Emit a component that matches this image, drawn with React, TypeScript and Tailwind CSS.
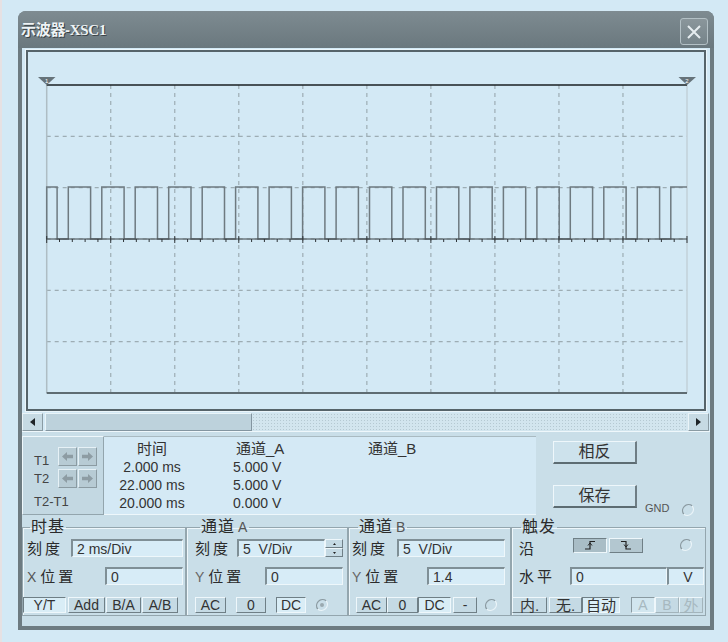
import React from "react";

const raised =
  "flex items-center justify-center h-[16px] text-[14px] leading-none text-[#333] bg-[#c5dae4] border border-t-[#eef7fb] border-l-[#eef7fb] border-b-[#6f7f86] border-r-[#6f7f86]";
const pressed =
  "flex items-center justify-center h-[16px] text-[14px] leading-none text-[#333] bg-[#d9edf6] border border-t-[#6f7f86] border-l-[#6f7f86] border-b-[#eef7fb] border-r-[#eef7fb]";
const input =
  "h-[18px] flex items-center pl-[4px] text-[14px] leading-none text-[#333] bg-[#d7ecf7] border-t-2 border-l-2 border-t-[#7f8f96] border-l-[#7f8f96] border-b border-r border-b-[#eef7fb] border-r-[#eef7fb]";
const label = "text-[15px] tracking-[3px] text-[#2b2b2b] leading-none";
const fieldset =
  "border border-[#94a6ae] shadow-[inset_1px_1px_0_#eef7fb] pb-[2px]";
const legend = "text-[16px] leading-[18px] px-[1px] text-[#2b2b2b] tracking-[1px]";

function Radio({ dot }: { dot?: boolean }) {
  return (
    <svg width="14" height="14" viewBox="0 0 14 14">
      <path d="M11.2 2.8 A6 6 0 0 0 2.8 11.2" fill="none" stroke="#8b9aa1" strokeWidth="1.3" />
      <path d="M2.8 11.2 A6 6 0 0 0 11.2 2.8" fill="none" stroke="#eaf4f8" strokeWidth="1.3" />
      {dot && <circle cx="7" cy="7" r="2" fill="#9aa9af" />}
    </svg>
  );
}

function ArrowBtn({ dir }: { dir: "l" | "r" }) {
  return (
    <div className="w-[19px] h-[19px] bg-[#b7cbd4] border border-t-[#e6f1f6] border-l-[#e6f1f6] border-b-[#8b9ba2] border-r-[#8b9ba2] flex items-center justify-center">
      <svg width="13" height="11" viewBox="0 0 13 11">
        {dir === "l" ? (
          <polygon points="1,5.5 6,1 6,3.8 12,3.8 12,7.2 6,7.2 6,10" fill="#8d9ca3" />
        ) : (
          <polygon points="12,5.5 7,1 7,3.8 1,3.8 1,7.2 7,7.2 7,10" fill="#8d9ca3" />
        )}
      </svg>
    </div>
  );
}

function Plot() {
  const x0 = 18.7;
  const x1 = 659;
  const dx = (x1 - x0) / 10;
  const y0 = 33;
  const y1 = 341;
  const dy = (y1 - y0) / 6;
  const hi = 135;
  const lo = 187;

  let d = `M${x0} ${lo} L${x0} ${hi} L29.1 ${hi} L29.1 ${lo}`;
  for (let k = 0; k < 19; k++) {
    const r = 40.3 + 33.47 * k;
    const f = r + 22.3;
    d += ` L${r.toFixed(1)} ${lo} L${r.toFixed(1)} ${hi}`;
    if (f < x1) d += ` L${f.toFixed(1)} ${hi} L${f.toFixed(1)} ${lo}`;
    else d += ` L${x1} ${hi}`;
  }

  const ticks = [];
  for (let i = 0; i <= 50; i++) {
    const x = x0 + (i * dx) / 5;
    const major = i % 5 === 0;
    ticks.push(
      <line key={i} x1={x} x2={x} y1={major ? lo - 3 : lo} y2={major ? lo + 4 : lo + 3} stroke="#2f3539" strokeWidth="1" />
    );
  }

  return (
    <svg width="676" height="357" viewBox="0 0 676 357" className="block">
      {Array.from({ length: 9 }, (_, i) => (
        <line key={"v" + i} x1={x0 + dx * (i + 1)} x2={x0 + dx * (i + 1)} y1={y0} y2={y1} stroke="#9dadb4" strokeWidth="1.2" strokeDasharray="4 4" />
      ))}
      {Array.from({ length: 5 }, (_, i) => (
        <line key={"h" + i} x1={x0} x2={x1} y1={y0 + dy * (i + 1)} y2={y0 + dy * (i + 1)} stroke="#9dadb4" strokeWidth="1.2" strokeDasharray="4 4" />
      ))}
      <line x1={x0} x2={x0} y1={y0} y2={y1} stroke="#aebdc4" strokeWidth="1.5" />
      <line x1={x1} x2={x1} y1={y0} y2={y1} stroke="#c2d1d8" strokeWidth="1.5" />
      <line x1={x0} x2={x1} y1={y1} y2={y1} stroke="#5e6c72" strokeWidth="2" />
      <line x1={x0} x2={x1} y1={y0} y2={y0} stroke="#1a1f22" strokeWidth="1.5" />
      <path d={d} fill="none" stroke="#6e7a80" strokeWidth="1.5" />
      <line x1={x0} x2={x1} y1={lo} y2={lo} stroke="#3a4246" strokeWidth="1" />
      {ticks}
      <polygon points="10,25 27.5,25 18.7,33" fill="#66737a" />
      <text x="18.7" y="30.5" fontSize="6" fill="#ffffff" textAnchor="middle" fontFamily="Liberation Sans, sans-serif">1</text>
      <polygon points="650.5,25 668,25 659,33" fill="#66737a" />
      <text x="659" y="30.5" fontSize="6" fill="#ffffff" textAnchor="middle" fontFamily="Liberation Sans, sans-serif">2</text>
    </svg>
  );
}

function ScrollArrow({ dir }: { dir: "l" | "r" }) {
  return (
    <div className="w-[21px] h-full bg-[#c6dae3] border border-t-[#eaf4f8] border-l-[#eaf4f8] border-b-[#8a9ba3] border-r-[#8a9ba3] flex items-center justify-center">
      <svg width="5" height="8" viewBox="0 0 5 8">
        {dir === "l" ? <polygon points="5,0 5,8 0,4" fill="#1f2427" /> : <polygon points="0,0 0,8 5,4" fill="#1f2427" />}
      </svg>
    </div>
  );
}

export default function App() {
  return (
    <div className="w-[728px] h-[642px] bg-[#d3e9f5] pt-[11px] pl-[16px] border-l-2 border-[#e6e1e3] font-['Liberation_Sans','Noto_Sans_CJK_SC',sans-serif] overflow-hidden">
      <div className="w-[696px] h-[619px] rounded-t-[8px] bg-[#6d7b81] flex flex-col">
        {/* title bar */}
        <div className="h-[37px] flex justify-between pl-[3px] pr-[6px] rounded-t-[8px] bg-[linear-gradient(to_bottom,#7e8b91,#6a787e)]">
          <div className="self-center mt-[2px] text-[15px] font-semibold text-[#eef3f5] [text-shadow:1px_1px_0_#3a4246] tracking-[-0.3px]">
            示波器-<span className="font-['Liberation_Serif',serif] text-[15px]">XSC1</span>
          </div>
          <div className="self-end mb-[3px] w-[28px] h-[27px] rounded-[3px] border border-[#b3c0c5] bg-[linear-gradient(to_bottom,#8a969b,#76848a)] flex items-center justify-center">
            <svg width="16" height="16" viewBox="0 0 16 16">
              <path d="M2 2 L14 14 M14 2 L2 14" stroke="#e6edf0" strokeWidth="2" />
            </svg>
          </div>
        </div>

        {/* content */}
        <div className="mx-[4px] h-[578px] bg-[#d3e9f5] flex flex-col">
          <div className="mt-[2px] mx-[4px] h-[361px] border-2 border-[#56646a] shadow-[0_0_0_1px_#eaf5fa] bg-[#d3e9f5]">
            <Plot />
          </div>

          {/* scrollbar */}
          <div className="flex h-[18px] mt-[2px] mr-[1px]">
            <ScrollArrow dir="l" />
            <div className="w-[2px]" />
            <div className="w-[207px] bg-[#bdd2dc] border border-t-[#e9f4f8] border-l-[#e9f4f8] border-b-[#8395a0] border-r-[#8395a0]" />
            <div className="flex-1 bg-[#d2e5ee] bg-[radial-gradient(circle,#b5c9d2_0.8px,transparent_1px)] bg-[length:3px_3px]" />
            <ScrollArrow dir="r" />
          </div>

          {/* lower panel */}
          <div className="flex-1 bg-[#c9dee8] border-t border-[#eef7fb] flex flex-col">
            <div className="flex mt-[4px] h-[79px]">
              {/* cursor box */}
              <div className="w-[82px] bg-[#c3d8e2] border border-t-[#eef7fb] border-l-[#eef7fb] border-b-[#93a5ad] border-r-[#93a5ad] pt-[10px] text-[13px] text-[#444]">
                <div className="flex items-center h-[19px]">
                  <span className="w-[35px] pl-[11px] mt-[8px]">T1</span>
                  <ArrowBtn dir="l" />
                  <div className="w-[1px]" />
                  <ArrowBtn dir="r" />
                </div>
                <div className="flex items-center h-[19px] mt-[3px]">
                  <span className="w-[35px] pl-[11px]">T2</span>
                  <ArrowBtn dir="l" />
                  <div className="w-[1px]" />
                  <ArrowBtn dir="r" />
                </div>
                <div className="mt-[7px] pl-[11px] leading-[14px]">T2-T1</div>
              </div>

              {/* readout */}
              <div className="w-[432px] bg-[#d4e9f5] border-t border-b border-t-[#a9bac1] border-b-[#eef7fb] flex text-[#333]">
                <div className="w-[96px] flex flex-col items-center">
                  <div className="mt-[3px] text-[15px] leading-[18px]">时间</div>
                  <div className="text-[14px] leading-[18px]">2.000 ms</div>
                  <div className="text-[14px] leading-[18px]">22.000 ms</div>
                  <div className="text-[14px] leading-[18px]">20.000 ms</div>
                </div>
                <div className="w-[132px] pl-[33px] flex flex-col">
                  <div className="mt-[3px] ml-[3px] text-[15px] leading-[18px]">通道_A</div>
                  <div className="text-[14px] leading-[18px]">5.000 V</div>
                  <div className="text-[14px] leading-[18px]">5.000 V</div>
                  <div className="text-[14px] leading-[18px]">0.000 V</div>
                </div>
                <div className="pl-[36px] flex flex-col">
                  <div className="mt-[3px] text-[15px] leading-[18px]">通道_B</div>
                </div>
              </div>

              {/* right buttons */}
              <div className="w-[174px] pl-[17px] flex flex-col">
                <div className="mt-[5px] w-[84px] h-[23px] flex items-center justify-center text-[16px] text-[#333] bg-[#cde2ec] border-t border-l border-t-[#eef7fb] border-l-[#eef7fb] border-b-2 border-r-2 border-b-[#5d6c72] border-r-[#6e7d84]">
                  相反
                </div>
                <div className="mt-[21px] flex items-end">
                  <div className="w-[84px] h-[23px] flex items-center justify-center text-[16px] text-[#333] bg-[#cde2ec] border-t border-l border-t-[#eef7fb] border-l-[#eef7fb] border-b-2 border-r-2 border-b-[#5d6c72] border-r-[#6e7d84]">
                    保存
                  </div>
                  <span className="ml-[8px] text-[11px] leading-none text-[#555] -mb-[6px]">GND</span>
                  <div className="ml-[12px] -mb-[9px]">
                    <Radio />
                  </div>
                </div>
              </div>
            </div>

            {/* groups */}
            <div className="flex mt-[3px]">
              {/* 时基 */}
              <fieldset className={`w-[164px] ${fieldset}`}>
                <legend className={`ml-[7px] ${legend}`}>时基</legend>
                <div className="flex items-center h-[18px] mt-[3px]">
                  <span className={`w-[48px] pl-[4px] ${label}`}>刻度</span>
                  <div className={`w-[112px] ${input}`}>2 ms/Div</div>
                </div>
                <div className="flex items-center h-[18px] mt-[10px]">
                  <span className={`w-[82px] pl-[4px] ${label}`}>
                    <span className="text-[14px] text-[#555] tracking-normal mr-[4px]">X</span>位置
                  </span>
                  <div className={`w-[78px] ${input}`}>0</div>
                </div>
                <div className="flex mt-[12px]">
                  <div className={`w-[43px] ${pressed}`}>Y/T</div>
                  <div className={`w-[37px] ml-[2px] ${raised}`}>Add</div>
                  <div className={`w-[35px] ml-[1px] ${raised}`}>B/A</div>
                  <div className={`w-[36px] ml-[1px] ${raised}`}>A/B</div>
                </div>
              </fieldset>

              {/* 通道 A */}
              <fieldset className={`w-[162px] ${fieldset}`}>
                <legend className={`ml-[13px] ${legend}`}>
                  通道<span className="text-[14px] text-[#555] ml-[3px]">A</span>
                </legend>
                <div className="flex items-center h-[18px] mt-[3px]">
                  <span className={`w-[50px] pl-[8px] ${label}`}>刻度</span>
                  <div className={`w-[88px] ${input}`}>5&nbsp;&nbsp;V/Div</div>
                  <div className="w-[18px] h-[18px] flex flex-col">
                    <div className="h-[9px] bg-[#c5dae4] border border-t-[#eef7fb] border-l-[#eef7fb] border-b-[#6f7f86] border-r-[#6f7f86] flex items-center justify-center">
                      <svg width="3" height="2" viewBox="0 0 3 2"><polygon points="1.5,0 3,2 0,2" fill="#222" /></svg>
                    </div>
                    <div className="h-[9px] bg-[#c5dae4] border border-t-[#eef7fb] border-l-[#eef7fb] border-b-[#6f7f86] border-r-[#6f7f86] flex items-center justify-center">
                      <svg width="3" height="2" viewBox="0 0 3 2"><polygon points="0,0 3,0 1.5,2" fill="#222" /></svg>
                    </div>
                  </div>
                </div>
                <div className="flex items-center h-[18px] mt-[10px]">
                  <span className={`w-[78px] pl-[8px] ${label}`}>
                    <span className="text-[14px] text-[#666] tracking-normal mr-[4px]">Y</span>位置
                  </span>
                  <div className={`w-[78px] ${input}`}>0</div>
                </div>
                <div className="flex items-center mt-[12px] pl-[8px]">
                  <div className={`w-[31px] ${raised}`}>AC</div>
                  <div className={`w-[30px] ml-[10px] ${raised}`}>0</div>
                  <div className={`w-[30px] ml-[10px] ${pressed}`}>DC</div>
                  <div className="ml-[9px]">
                    <Radio dot />
                  </div>
                </div>
              </fieldset>

              {/* 通道 B */}
              <fieldset className={`w-[163px] ${fieldset}`}>
                <legend className={`ml-[9px] ${legend}`}>
                  通道<span className="text-[14px] text-[#555] ml-[3px]">B</span>
                </legend>
                <div className="flex items-center h-[18px] mt-[3px]">
                  <span className={`w-[48px] pl-[3px] ${label}`}>刻度</span>
                  <div className={`w-[108px] ${input}`}>5&nbsp;&nbsp;V/Div</div>
                </div>
                <div className="flex items-center h-[18px] mt-[10px]">
                  <span className={`w-[78px] pl-[3px] ${label}`}>
                    <span className="text-[14px] text-[#666] tracking-normal mr-[4px]">Y</span>位置
                  </span>
                  <div className={`w-[78px] ${input}`}>1.4</div>
                </div>
                <div className="flex items-center mt-[12px] pl-[7px]">
                  <div className={`w-[31px] ${raised}`}>AC</div>
                  <div className={`w-[31px] ${raised}`}>0</div>
                  <div className={`w-[33px] ${pressed}`}>DC</div>
                  <div className={`w-[24px] ml-[2px] ${raised}`}>-</div>
                  <div className="ml-[7px]">
                    <Radio />
                  </div>
                </div>
              </fieldset>

              {/* 触发 */}
              <fieldset className={`w-[195px] ${fieldset}`}>
                <legend className={`ml-[9px] ${legend}`}>触发</legend>
                <div className="flex items-center h-[18px] mt-[3px]">
                  <span className={`w-[61px] pl-[7px] ${label}`}>沿</span>
                  <div className="w-[34px] h-[15px] -mt-[6px] bg-[#a9bdc6] border border-t-[#6f7f86] border-l-[#6f7f86] border-b-[#eef7fb] border-r-[#eef7fb] flex items-center justify-center">
                    <svg width="12" height="10" viewBox="0 0 12 10">
                      <path d="M1 9 H6 V1.5 H11" fill="none" stroke="#222" strokeWidth="1.2" />
                      <path d="M4 5.5 L6 3 L8 5.5" fill="none" stroke="#222" strokeWidth="1" />
                    </svg>
                  </div>
                  <div className="w-[34px] h-[15px] ml-[2px] -mt-[6px] bg-[#b3c7d0] border border-t-[#eef7fb] border-l-[#eef7fb] border-b-[#6f7f86] border-r-[#6f7f86] flex items-center justify-center">
                    <svg width="12" height="10" viewBox="0 0 12 10">
                      <path d="M1 1.5 H6 V9 H11" fill="none" stroke="#222" strokeWidth="1.2" />
                      <path d="M4 4.5 L6 7 L8 4.5" fill="none" stroke="#222" strokeWidth="1" />
                    </svg>
                  </div>
                  <div className="ml-[36px] -mt-[6px]">
                    <Radio />
                  </div>
                </div>
                <div className="flex items-center h-[18px] mt-[10px]">
                  <span className={`w-[58px] pl-[7px] ${label}`}>水平</span>
                  <div className={`w-[97px] ${input}`}>0</div>
                  <div className={`w-[37px] justify-center pl-0 ${input}`}>V</div>
                </div>
                <div className="flex items-center mt-[12px]">
                  <div className={`w-[35px] text-[15px] ${raised}`}>内.</div>
                  <div className={`w-[33px] ml-[2px] text-[15px] ${raised}`}>无.</div>
                  <div className={`w-[38px] text-[15px] ${pressed}`}>自动</div>
                  <div className="ml-[11px] flex">
                    <div className="w-[24px] h-[16px] flex items-center justify-center text-[14px] leading-none text-[#a7b8bf] bg-[#d2e6ef] border border-t-[#8a9aa1] border-l-[#8a9aa1] border-b-[#eef7fb] border-r-[#eef7fb]">A</div>
                    <div className="w-[24px] h-[16px] flex items-center justify-center text-[14px] leading-none text-[#a7b8bf] bg-[#c5dae4] border border-t-[#eef7fb] border-l-[#eef7fb] border-b-[#a3b4bb] border-r-[#a3b4bb]">B</div>
                    <div className="w-[24px] h-[16px] flex items-center justify-center text-[15px] leading-none text-[#a7b8bf] bg-[#c5dae4] border border-t-[#eef7fb] border-l-[#eef7fb] border-b-[#a3b4bb] border-r-[#a3b4bb]">外</div>
                  </div>
                </div>
              </fieldset>
            </div>
          </div>
        </div>
      </div>
    </div>
  );
}
